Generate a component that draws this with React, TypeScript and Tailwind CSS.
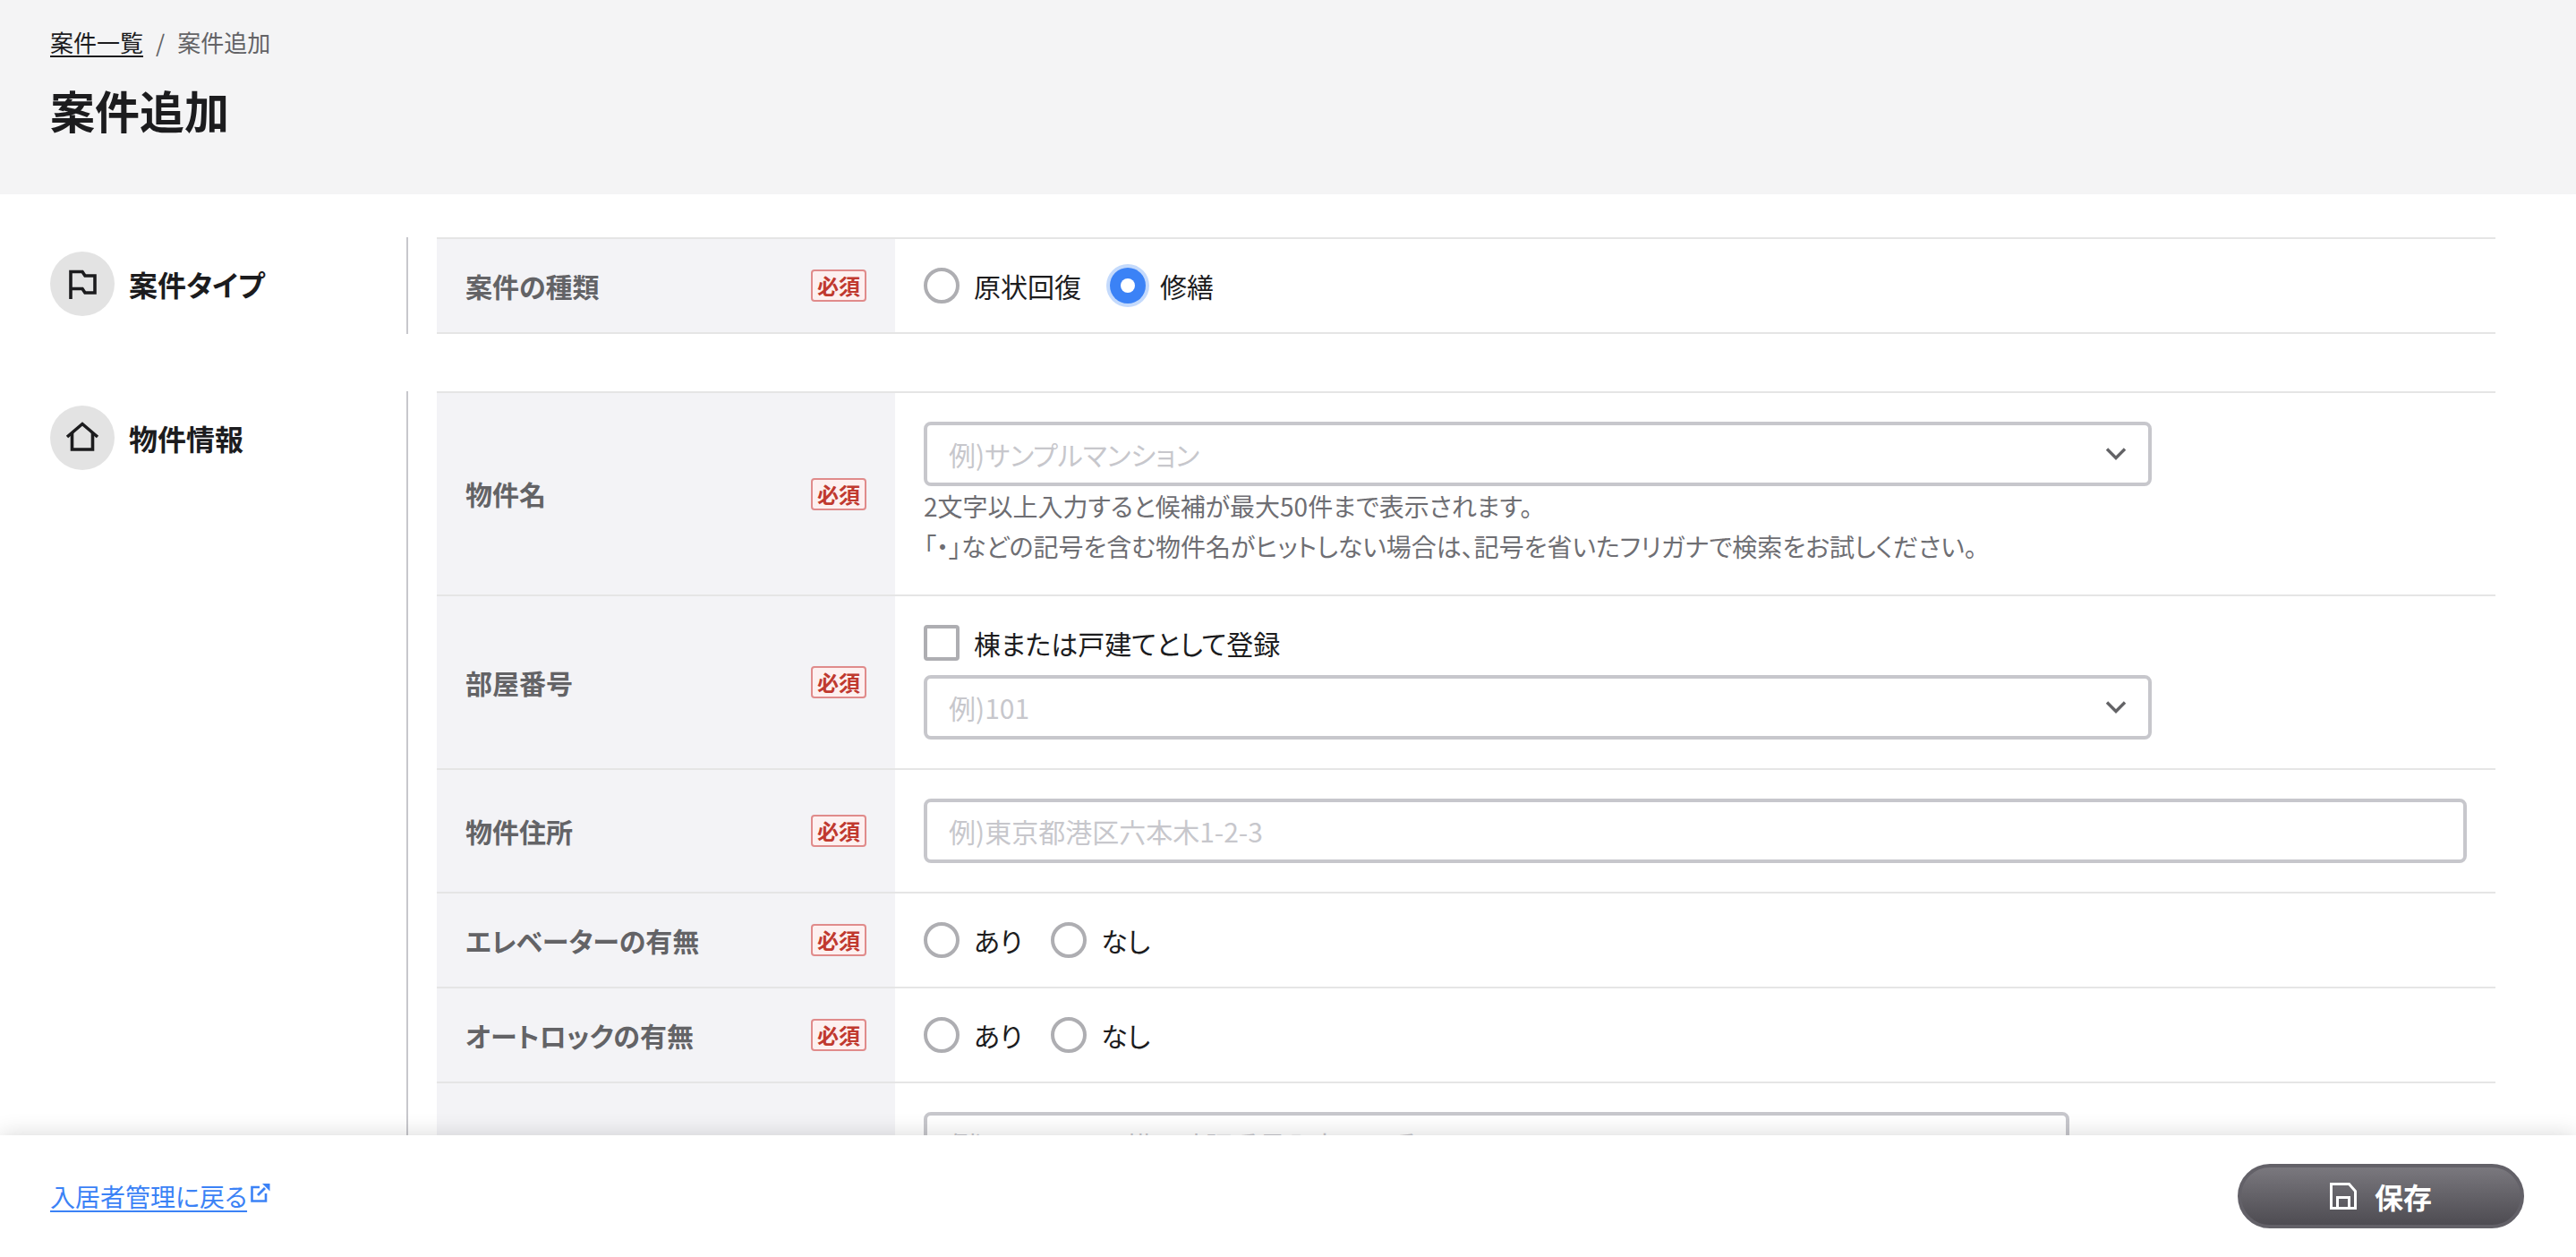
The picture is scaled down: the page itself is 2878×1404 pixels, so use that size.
import type { ReactNode } from "react";

const SELECT_W = "w-[1372px]";

function FlagIcon() {
  return (
    <svg width="72" height="72" viewBox="56 281 72 72" fill="none" stroke="#1c1c1e" strokeWidth="3.6">
      <path d="M79 334V303.5H92L95 308H106V327H95L92 322.5H79" strokeLinejoin="miter" />
    </svg>
  );
}

function HomeIcon() {
  return (
    <svg width="72" height="72" viewBox="56 453 72 72" fill="none" stroke="#1c1c1e" strokeWidth="3.6">
      <path d="M75 488L92 473.5L109 488" />
      <path d="M80.5 483V502H103.5V483" />
    </svg>
  );
}

function SaveIcon() {
  return (
    <svg width="30" height="30" viewBox="0 0 30 30" fill="none" stroke="#ffffff" strokeWidth="3">
      <path d="M1.5 1.5H21.5L28.5 9.5V28.5H1.5Z" />
      <path d="M8.5 28V16.5H21.5V28" />
    </svg>
  );
}

function ExternalIcon() {
  return (
    <svg width="22" height="22" viewBox="0 0 22 22" fill="none" className="ml-[4px] mb-[8px]">
      <path d="M10 5H1.5V20.5H17V12" stroke="#3b82f6" strokeWidth="2.6" />
      <path d="M8 14L16 6" stroke="#3b82f6" strokeWidth="2.8" />
      <path d="M13 1H21.5V9.5Z" fill="#3b82f6" />
    </svg>
  );
}

function Chevron() {
  return (
    <svg width="24" height="16" viewBox="0 0 24 16" fill="none" stroke="#636366" strokeWidth="3.4">
      <path d="M2 2.5L12 12.5L22 2.5" />
    </svg>
  );
}

function Badge() {
  return (
    <span className="flex h-[36px] w-[62px] shrink-0 items-center justify-center rounded-[4px] border-2 border-[#e08b8b] bg-[#fdf0f0] text-[24px] leading-none font-bold text-[#c0392f]">
      必須
    </span>
  );
}

function Radio({ label, checked }: { label: string; checked?: boolean }) {
  return (
    <label className="flex items-center gap-[16px]">
      {checked ? (
        <span className="flex h-[40px] w-[40px] items-center justify-center rounded-full bg-[#3b82f6] ring-4 ring-[#c4dafc]">
          <span className="h-[16px] w-[16px] rounded-full bg-white" />
        </span>
      ) : (
        <span className="h-[40px] w-[40px] rounded-full border-4 border-[#aeaeb2] bg-white" />
      )}
      <span className="text-[30px] leading-[40px] text-[#1c1c1e]">{label}</span>
    </label>
  );
}

function Field({ placeholder, select, width }: { placeholder: string; select?: boolean; width: string }) {
  return (
    <div className={`flex h-[72px] items-center rounded-[8px] border-4 border-[#c7c7cc] bg-white pr-[24px] pl-[24px] ${width}`}>
      <input
        readOnly
        placeholder={placeholder}
        className="min-w-0 flex-1 bg-transparent text-[30px] text-[#1c1c1e] outline-none placeholder:text-[#c7c7cc]"
      />
      {select && <Chevron />}
    </div>
  );
}

function Row({ label, children, body = "" }: { label?: string; children: ReactNode; body?: string }) {
  return (
    <div className="flex border-b-2 border-[#e5e5e5]">
      <div className="flex w-[512px] shrink-0 items-center justify-between bg-[#f3f3f6] px-[32px]">
        <span className="text-[30px] font-bold text-[#636366]">{label}</span>
        {label && <Badge />}
      </div>
      <div className={`min-w-0 flex-1 p-[32px] ${body}`}>{children}</div>
    </div>
  );
}

function Section({ title, icon, children, className = "" }: { title: string; icon: ReactNode; children: ReactNode; className?: string }) {
  return (
    <section className={`flex ${className}`}>
      <div className="w-[454px] shrink-0 pt-[16px] pl-[56px]">
        <div className="flex items-center gap-[16px]">
          <span className="h-[72px] w-[72px] rounded-full bg-[#e3e3e3]">{icon}</span>
          <h2 className="text-[32px] font-bold text-[#1c1c1e]">{title}</h2>
        </div>
      </div>
      <div className="min-w-0 flex-1 border-l-2 border-[#c7c7cc] pl-[32px]">
        <div className="border-t-2 border-[#e5e5e5]">{children}</div>
      </div>
    </section>
  );
}

export default function App() {
  return (
    <div className="flex h-[1404px] flex-col overflow-hidden bg-white font-['Noto_Sans_CJK_JP','Noto_Sans',sans-serif] [font-feature-settings:'palt']">
      <main className="min-h-0 flex-1 overflow-hidden">
        <header className="h-[217px] bg-[#f4f4f5] pt-[30px] pl-[56px]">
          <nav className="flex items-center gap-[14px] text-[26px] leading-[34px] text-[#636366]">
            <a className="text-[#1c1c1e] underline underline-offset-4">案件一覧</a>
            <span>/</span>
            <span>案件追加</span>
          </nav>
          <h1 className="mt-[22px] text-[50px] leading-[72px] font-bold text-[#1c1c1e]">案件追加</h1>
        </header>

        <div className="pt-[48px] pr-[90px]">
          <Section title="案件タイプ" icon={<FlagIcon />} className="mb-[64px]">
            <Row label="案件の種類" body="flex items-center gap-[32px]">
              <Radio label="原状回復" />
              <Radio label="修繕" checked />
            </Row>
          </Section>

          <Section title="物件情報" icon={<HomeIcon />}>
            <Row label="物件名">
              <Field placeholder="例)サンプルマンション" select width={SELECT_W} />
              <p className="text-[28px] leading-[44.5px] text-[#6e6e73]">
                2文字以上入力すると候補が最大50件まで表示されます。
                <br />
                「・」などの記号を含む物件名がヒットしない場合は、記号を省いたフリガナで検索をお試しください。
              </p>
            </Row>
            <Row label="部屋番号" body="flex flex-col gap-[16px]">
              <label className="flex items-center gap-[16px]">
                <span className="h-[40px] w-[40px] rounded-[4px] border-4 border-[#aeaeb2] bg-white" />
                <span className="text-[30px] leading-[40px] text-[#1c1c1e]">棟または戸建てとして登録</span>
              </label>
              <Field placeholder="例)101" select width={SELECT_W} />
            </Row>
            <Row label="物件住所">
              <Field placeholder="例)東京都港区六本木1-2-3" width="w-full" />
            </Row>
            <Row label="エレベーターの有無" body="flex items-center gap-[32px]">
              <Radio label="あり" />
              <Radio label="なし" />
            </Row>
            <Row label="オートロックの有無" body="flex items-center gap-[32px]">
              <Radio label="あり" />
              <Radio label="なし" />
            </Row>
            <Row>
              <Field placeholder="例)エントランス横の暗証番号入力 888番" width="w-[1280px]" />
            </Row>
          </Section>
        </div>
      </main>

      <footer className="relative z-10 flex h-[136px] shrink-0 items-center justify-between bg-white pr-[58px] pl-[56px] shadow-[0_0_24px_rgba(0,0,0,0.16)]">
        <a className="flex items-center text-[28px] text-[#3b82f6]">
          <span className="underline underline-offset-4">入居者管理に戻る</span>
          <ExternalIcon />
        </a>
        <button className="flex h-[72px] w-[320px] items-center justify-center gap-[20px] rounded-full border-4 border-[#636168] bg-gradient-to-b from-[#7a787e] to-[#4e4c52] text-[32px] font-bold text-white">
          <SaveIcon />
          保存
        </button>
      </footer>
    </div>
  );
}
